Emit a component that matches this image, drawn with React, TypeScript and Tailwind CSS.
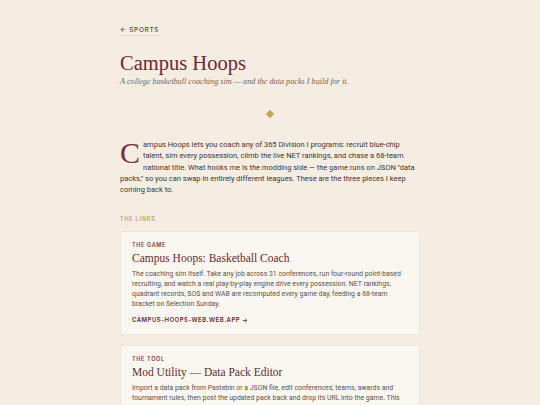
import React from 'react';

const links = [
  {
    kicker: 'THE GAME',
    title: 'Campus Hoops: Basketball Coach',
    body: 'The coaching sim itself. Take any job across 31 conferences, run four-round point-based recruiting, and watch a real play-by-play engine drive every possession. NET rankings, quadrant records, SOS and WAB are recomputed every game day, feeding a 68-team bracket on Selection Sunday.',
    href: 'CAMPUS-HOOPS-WEB.WEB.APP →',
  },
  {
    kicker: 'THE TOOL',
    title: 'Mod Utility — Data Pack Editor',
    body: 'Import a data pack from Pastebin or a JSON file, edit conferences, teams, awards and tournament rules, then post the updated pack back and drop its URL into the game. This lets you build whole new leagues without touching code.',
    href: 'MOD-UTILITY.WEB.APP →',
  },
];

export default function App() {
  const serif = { fontFamily: '"Liberation Serif", "DejaVu Serif", serif' };
  const sans = { fontFamily: 'Roboto, "Liberation Sans", sans-serif' };
  return (
    <div
      className="w-[540px] h-[405px] overflow-hidden bg-[#f5ede1] text-[#3b332e]"
      style={{ fontFamily: 'Inter, "Liberation Sans", sans-serif' }}
    >
      <div className="w-[300px] mx-auto pt-[26px]">
        {/* Back link */}
        <div className="flex">
          <a className="block text-[6.5px] leading-[8px] tracking-[0.1em] font-medium text-[#7a3a3a] border-b border-[#e6d8c6] pb-[1px]">
            ← SPORTS
          </a>
        </div>

        {/* Header */}
        <h1 className="mt-[15px] text-[20.5px] leading-[24px] text-[#6b2a2e]" style={serif}>
          Campus Hoops
        </h1>
        <p className="mt-[1px] text-[8.2px] leading-[12px] italic text-[#6f6560]" style={serif}>
          A college basketball coaching sim — and the data packs I build for it.
        </p>

        {/* Divider */}
        <div className="flex justify-center mt-[23px]">
          <div className="w-[6px] h-[6px] rotate-45 bg-[#c6a25a]" />
        </div>

        {/* Intro */}
        <p className="mt-[22px] text-[7.5px] leading-[11.25px] text-[#3d3530]" style={sans}>
          <span
            className="float-left text-[30px] leading-[21px] mr-[3px] mt-[3px] text-[#7a2e34]"
            style={serif}
          >
            C
          </span>
          ampus Hoops lets you coach any of 365 Division I programs: recruit blue-chip talent, sim every
          possession, climb the live NET rankings, and chase a 68-team national title. What hooks me is
          the modding side — the game runs on JSON "data packs," so you can swap in entirely different
          leagues. These are the three pieces I keep coming back to.
        </p>

        {/* Links */}
        <div className="mt-[19.5px] text-[5.5px] leading-[8px] font-semibold tracking-[0.14em] text-[#c6a25a]">
          THE LINKS
        </div>
        <div className="mt-[8px] flex flex-col gap-[10px]">
          {links.map((l) => (
            <div
              key={l.kicker}
              className="bg-[#faf7f1] border border-[#ede5d9] rounded-[3px] px-[11px] pt-[9px] pb-[10px]"
            >
              <div className="text-[5.5px] leading-[8px] font-semibold tracking-[0.12em] text-[#7a3a3a]">
                {l.kicker}
              </div>
              <div className="mt-[2px] text-[11.5px] leading-[14px] text-[#6b2a2e]" style={serif}>
                {l.title}
              </div>
              <p className="mt-[4px] text-[6.9px] leading-[10px] text-[#5a524c]" style={sans}>
                {l.body}
              </p>
              <div className="mt-[7px] text-[6px] leading-[8px] font-semibold tracking-[0.08em] text-[#6b2a2e]">
                {l.href}
              </div>
            </div>
          ))}
        </div>
      </div>
    </div>
  );
}
